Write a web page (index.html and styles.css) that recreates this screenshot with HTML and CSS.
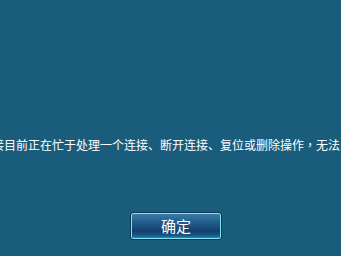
FILE: index.html
```html
<!DOCTYPE html>
<html lang="zh-CN">
<head>
<meta charset="utf-8">
<link rel="stylesheet" href="styles.css">
</head>
<body>
<div class="dialog">
  <p class="message"><span>接</span><span>目</span><span>前</span><span>正</span><span>在</span><span>忙</span><span>于</span><span>处</span><span>理</span><span>一</span><span>个</span><span>连</span><span>接</span><span>、</span><span>断</span><span>开</span><span>连</span><span>接</span><span>、</span><span>复</span><span>位</span><span>或</span><span>删</span><span>除</span><span>操</span><span>作</span><span class="punct" lang="zh-TW">，</span><span>无</span><span>法</span></p>
  <div class="actions">
    <button class="ok">确定</button>
  </div>
</div>
</body>
</html>
```
FILE: styles.css
```css
html, body {
  margin: 0;
  padding: 0;
  background: #195c7c;
  width: 341px;
  height: 256px;
  overflow: hidden;
}
.dialog {
  display: flex;
  flex-direction: column;
  font-family: "Noto Sans CJK SC", "Noto Sans", sans-serif;
}
.message {
  display: flex;
  margin: 137px 0 0 -8px;
  font-size: 12px;
  line-height: 16px;
  color: #ffffff;
  white-space: nowrap;
}
.message span {
  flex: 0 0 12px;
  width: 12px;
  text-align: center;
}
.message .punct {
  font-family: "Noto Sans CJK TC", sans-serif;
}
.actions {
  display: flex;
  padding-left: 130px;
  margin-top: 59px;
}
.ok {
  width: 92px;
  height: 28px;
  box-sizing: border-box;
  padding: 0;
  border: 1px solid #0f3a55;
  border-radius: 3px;
  box-shadow: inset 0 0 0 1px #7fe4f4;
  background: linear-gradient(to bottom, #3a7fa8 0%, #235f8c 35%, #133f70 70%, #1a5a8c 88%, #3d9cc4 100%);
  color: #ffffff;
  font-family: "Noto Sans CJK SC", sans-serif;
  font-size: 15px;
  line-height: 24px;
}
```
